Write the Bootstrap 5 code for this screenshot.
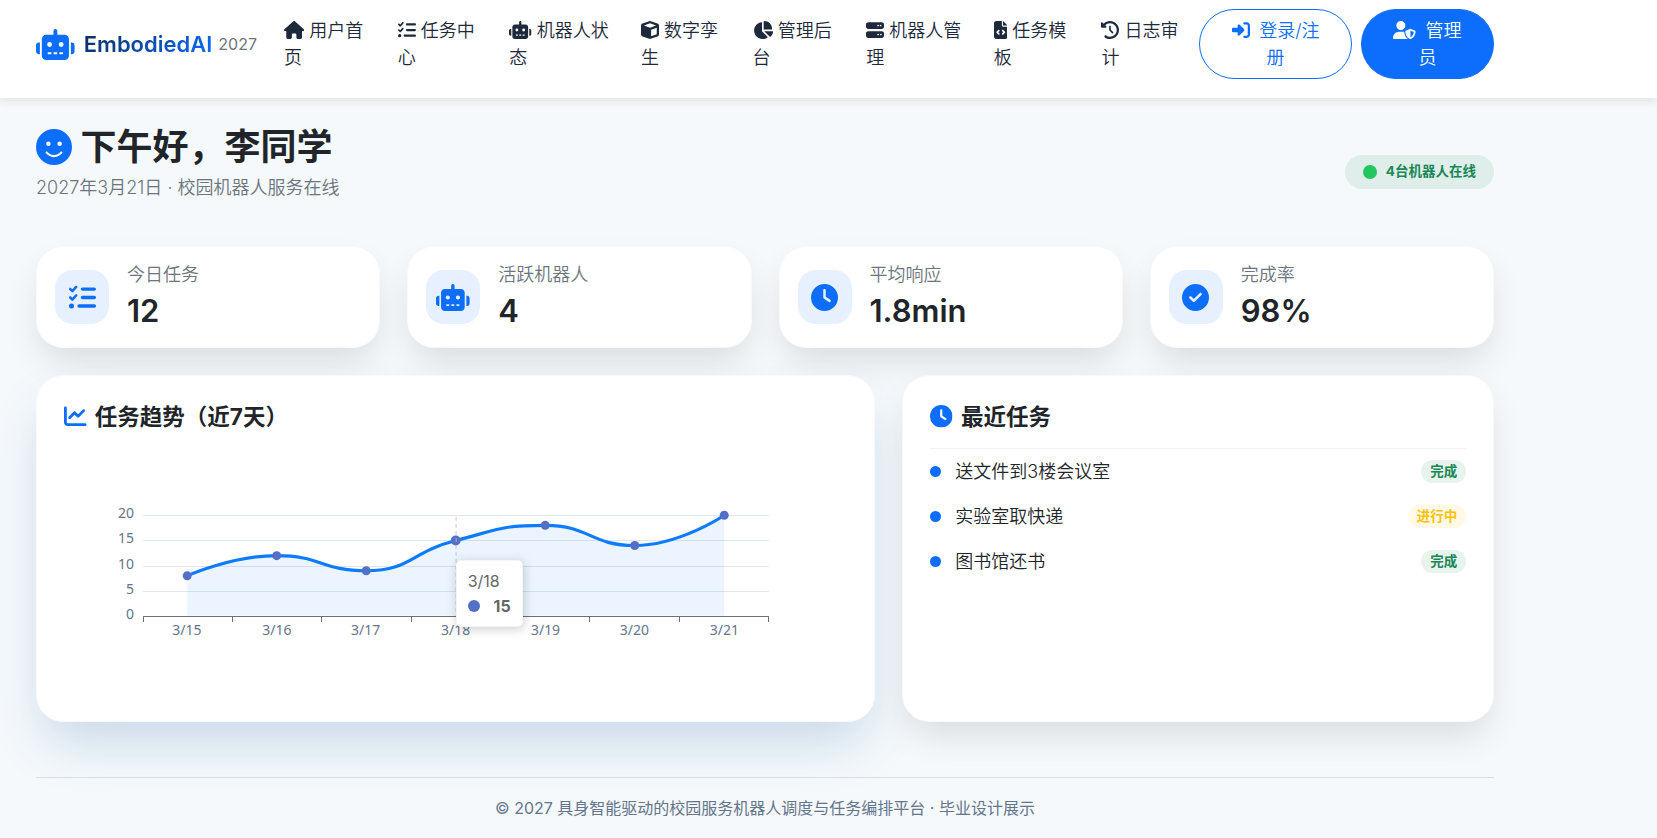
<!DOCTYPE html>
<html lang="zh-CN">
<head>
<meta charset="utf-8">
<meta name="viewport" content="width=device-width, initial-scale=1">
<title>EmbodiedAI 2027</title>
<link href="https://cdn.jsdelivr.net/npm/bootstrap@5.3.0/dist/css/bootstrap.min.css" rel="stylesheet">
<style>
  html { font-size: 18px; }
  body {
    font-family: Inter, "Noto Sans CJK SC", sans-serif;
    font-weight: 350;
    background: #f5f9fc;
    color: #212529;
  }
  .shell { max-width: 1530px; padding: 0 36px; }
  .ico { height: 1em; width: auto; fill: currentColor; vertical-align: -0.125em; }

  .topbar { background: #fff; padding: 9px 0 19px; box-shadow: 0 2px 10px rgba(0, 0, 0, .1); }
  .brand-text {
    font-size: 22px; font-weight: 600; margin-left: 9px;
    background: linear-gradient(135deg, #0b2b5a, #0d6efd);
    -webkit-background-clip: text; background-clip: text; color: transparent;
  }
  .brand-mark { height: 31px; color: #0d6efd; }
  .brand-year { font-size: 16px; font-weight: 400; color: #6c757d; margin-left: 6px; }
  .site-menu { gap: 27px; margin-left: 27px; margin-right: 13px; }
  .site-menu a { color: #1e293b; text-decoration: none; display: block; }
  .pill-btn { font-weight: 350; border-radius: 36px; padding: 7px 26px; }
  .pill-login { width: 153px; }
  .pill-admin { width: 133px; }

  .greet { font-size: 36px; line-height: 44px; font-weight: 700; margin-bottom: 5px; }
  .online { padding: 10px 18px; border-radius: 17px; }
  .online-dot { width: 14px; height: 14px; background: #22c55e; }

  .tile {
    background: #fff; border: 1px solid #f7f9fb; border-radius: 27px;
    box-shadow: 0 18px 36px -6px rgba(0, 0, 0, .12);
  }
  .tile-stat { padding: 14px 18px; }
  .tile-glow { box-shadow: 0 27px 54px -9px rgba(13, 80, 150, .2); }
  .tile-icon { width: 54px; height: 54px; border-radius: 18px; background: #e6f0ff; color: #0d6efd; font-size: 27px; }
  .stat-value { font-size: 31px; line-height: 45px; font-weight: 600; }
  .tile-title { font-weight: 700; margin-bottom: 18px; }
  .tile-title .ico { margin-right: 3px; }

  .task-row { padding: 9px 0; }
  .task-dot { width: 11px; height: 11px; margin-right: 14px; background: #0d6efd; }
  .task-list { border-top: 1px solid #f1f4f6; }

  .chart-area { min-height: 246px; }
  .chart-area text { font: 14px "Noto Sans", sans-serif; fill: #64748b; }
  .chart-tip {
    left: 50%; top: 112px; width: 67px; height: 67px; padding: 9px 11px;
    background: #fff; border: 1px solid #f4f4f6; border-radius: 5px; color: #666;
    font-size: 16px; font-weight: 400; box-shadow: 1px 2px 11px rgba(0, 0, 0, .2);
  }
  .chart-tip div { line-height: 22px; }
  .chart-tip .tip-dot { width: 12px; height: 12px; background: #5470c6; }
  .page-foot { border-top: 1px solid #dbe0e5; margin-top: 55px; padding: 18px 0; font-size: 16px; font-weight: 400; color: #64748b; }
</style>
</head>
<body>

<svg class="d-none" xmlns="http://www.w3.org/2000/svg">
  <symbol id="robot" viewBox="0 0 640 512"><path d="M320 0c17.700 0 32 14.300 32 32l0 64 120 0c39.800 0 72 32.200 72 72l0 272c0 39.800-32.200 72-72 72l-304 0c-39.800 0-72-32.200-72-72l0-272c0-39.800 32.200-72 72-72l120 0 0-64c0-17.700 14.300-32 32-32zM208 384c-8.800 0-16 7.200-16 16s7.200 16 16 16l32 0c8.800 0 16-7.200 16-16s-7.200-16-16-16l-32 0zm96 0c-8.800 0-16 7.200-16 16s7.200 16 16 16l32 0c8.800 0 16-7.200 16-16s-7.200-16-16-16l-32 0zm96 0c-8.800 0-16 7.200-16 16s7.200 16 16 16l32 0c8.800 0 16-7.200 16-16s-7.200-16-16-16l-32 0zM264 256a40 40 0 1 0 -80 0 40 40 0 1 0 80 0zm152 40a40 40 0 1 0 0-80 40 40 0 1 0 0 80zM48 224l16 0 0 192-16 0c-26.500 0-48-21.500-48-48l0-96c0-26.500 21.500-48 48-48zm544 0c26.500 0 48 21.500 48 48l0 96c0 26.500-21.500 48-48 48l-16 0 0-192 16 0z"/></symbol>
  <symbol id="tasks" viewBox="0 0 512 512"><path d="M152.100 38.200c9.900 8.900 10.700 24 1.800 33.900l-72 80c-4.400 4.900-10.600 7.800-17.200 7.900s-12.900-2.400-17.600-7L7 113C-2.300 103.600-2.300 88.400 7 79s24.600-9.400 33.900 0l22.100 22.100 55.100-61.200c8.900-9.900 24-10.700 33.900-1.800zm0 160c9.900 8.900 10.700 24 1.800 33.900l-72 80c-4.400 4.900-10.600 7.800-17.200 7.900s-12.900-2.400-17.600-7L7 273c-9.400-9.400-9.400-24.600 0-33.900s24.600-9.400 33.900 0l22.100 22.100 55.100-61.200c8.900-9.900 24-10.700 33.900-1.800zM224 96c0-17.700 14.300-32 32-32l224 0c17.700 0 32 14.300 32 32s-14.300 32-32 32l-224 0c-17.700 0-32-14.300-32-32zm0 160c0-17.700 14.300-32 32-32l224 0c17.700 0 32 14.300 32 32s-14.300 32-32 32l-224 0c-17.700 0-32-14.300-32-32zM160 416c0-17.700 14.300-32 32-32l288 0c17.700 0 32 14.300 32 32s-14.300 32-32 32l-288 0c-17.700 0-32-14.300-32-32zM48 368a48 48 0 1 1 0 96 48 48 0 1 1 0-96z"/></symbol>
  <symbol id="clock" viewBox="0 0 512 512"><path d="M256 0a256 256 0 1 1 0 512A256 256 0 1 1 256 0zM232 120l0 136c0 8 4 15.500 10.700 20l96 64c11 7.400 25.900 4.400 33.300-6.700s4.400-25.900-6.700-33.300L280 243.200 280 120c0-13.300-10.700-24-24-24s-24 10.700-24 24z"/></symbol>
</svg>

<header class="topbar position-relative">
  <nav class="shell d-flex align-items-center" aria-label="主导航">
    <a href="#" class="d-flex align-items-center text-decoration-none flex-shrink-0">
      <svg class="ico brand-mark" viewBox="0 0 640 512"><use href="#robot"/></svg>
      <span class="brand-text">EmbodiedAI</span>
      <span class="brand-year">2027</span>
    </a>
    <ul class="site-menu list-unstyled d-flex mb-0 flex-fill">
      <li><a href="#"><svg class="ico" viewBox="0 0 576 512"><path d="M575.8 255.5c0 18-15 32.1-32 32.1l-32 0 .7 160.2c0 2.700-.2 5.400-.5 8.100l0 16.200c0 22.100-17.900 40-40 40l-16 0c-1.100 0-2.200 0-3.300-.1c-1.400 .1-2.800 .1-4.200 .1L416 512l-24 0c-22.100 0-40-17.900-40-40l0-24 0-64c0-17.700-14.300-32-32-32l-64 0c-17.700 0-32 14.300-32 32l0 64 0 24c0 22.100-17.900 40-40 40l-24 0-31.900 0c-1.500 0-3-.1-4.500-.2c-1.200 .1-2.400 .2-3.600 .2l-16 0c-22.100 0-40-17.900-40-40l0-112c0-.9 0-1.900 .1-2.800l0-69.700-32 0c-18 0-32-14-32-32.100c0-9 3-17 10-24L266.400 8c7-7 15-8 22-8s15 2 21 7L564.800 231.500c8 7 12 15 11 24z"/></svg> 用户首页</a></li>
      <li><a href="#"><svg class="ico" viewBox="0 0 512 512"><use href="#tasks"/></svg> 任务中心</a></li>
      <li><a href="#"><svg class="ico" viewBox="0 0 640 512"><use href="#robot"/></svg> 机器人状态</a></li>
      <li><a href="#"><svg class="ico" viewBox="0 0 512 512"><path d="M234.500 5.700c13.900-5 29.100-5 43.100 0l192 68.600C495 83.400 512 107.500 512 134.600l0 242.900c0 27-17 51.200-42.500 60.300l-192 68.600c-13.900 5-29.100 5-43.100 0l-192-68.600C17 428.600 0 404.500 0 377.400L0 134.600c0-27 17-51.200 42.500-60.300l192-68.600zM256 66L82.300 128 256 190l173.700-62L256 66zm32 368.600l160-57.100 0-188L288 246.600l0 188z"/></svg> 数字孪生</a></li>
      <li><a href="#"><svg class="ico" viewBox="0 0 576 512"><path d="M304 240l0-223.400c0-9 7-16.600 16-16.600C443.700 0 544 100.300 544 224c0 9-7.600 16-16.600 16L304 240zM32 272C32 150.700 122.100 50.300 239 34.300c9.200-1.300 17 6.100 17 15.400L256 288 412.500 444.500c6.700 6.700 6.200 17.700-1.500 23.100C371.800 495.600 323.800 512 272 512C139.500 512 32 404.600 32 272zm526.400 16c9.300 0 16.600 7.800 15.400 17c-7.700 55.900-34.600 105.600-73.900 142.300c-6 5.600-15.400 5.200-21.200-.7L320 288l238.400 0z"/></svg> 管理后台</a></li>
      <li><a href="#"><svg class="ico" viewBox="0 0 512 512"><path d="M64 32C28.700 32 0 60.700 0 96l0 64c0 35.300 28.700 64 64 64l384 0c35.300 0 64-28.700 64-64l0-64c0-35.300-28.700-64-64-64L64 32zm280 72a24 24 0 1 1 0 48 24 24 0 1 1 0-48zm48 24a24 24 0 1 1 48 0 24 24 0 1 1 -48 0zM64 288c-35.300 0-64 28.700-64 64l0 64c0 35.300 28.700 64 64 64l384 0c35.300 0 64-28.700 64-64l0-64c0-35.300-28.700-64-64-64L64 288zm280 72a24 24 0 1 1 0 48 24 24 0 1 1 0-48zm56 24a24 24 0 1 1 48 0 24 24 0 1 1 -48 0z"/></svg> 机器人管理</a></li>
      <li><a href="#"><svg class="ico" viewBox="0 0 384 512"><path d="M64 0C28.700 0 0 28.700 0 64L0 448c0 35.300 28.700 64 64 64l256 0c35.300 0 64-28.700 64-64l0-288-128 0c-17.700 0-32-14.300-32-32L224 0 64 0zM256 0l0 128 128 0L256 0zM153 289l-31 31 31 31c9.400 9.400 9.400 24.600 0 33.900s-24.600 9.400-33.900 0L71 337c-9.400-9.400-9.400-24.600 0-33.900l48-48c9.400-9.400 24.600-9.400 33.900 0s9.400 24.600 0 33.900zM265 255l48 48c9.400 9.400 9.400 24.600 0 33.900l-48 48c-9.400 9.400-24.600 9.400-33.900 0s-9.400-24.600 0-33.900l31-31-31-31c-9.400-9.400-9.400-24.600 0-33.900s24.600-9.400 33.900 0z"/></svg> 任务模板</a></li>
      <li><a href="#"><svg class="ico" viewBox="0 0 512 512"><path d="M75 75L41 41C25.900 25.900 0 36.600 0 57.900L0 168c0 13.300 10.700 24 24 24l110.100 0c21.400 0 32.100-25.900 17-41l-30.800-30.800C155 85.500 203 64 256 64c106 0 192 86 192 192s-86 192-192 192c-40.800 0-78.600-12.700-109.700-34.400c-14.500-10.100-34.400-6.600-44.600 7.900s-6.600 34.400 7.900 44.600C151.200 495 201.700 512 256 512c141.400 0 256-114.600 256-256S397.400 0 256 0C185.300 0 121.300 28.700 75 75zm181 53c-13.300 0-24 10.700-24 24l0 104c0 6.400 2.500 12.500 7 17l72 72c9.400 9.400 24.600 9.400 33.900 0s9.400-24.600 0-33.900l-65-65 0-94.100c0-13.300-10.700-24-24-24z"/></svg> 日志审计</a></li>
    </ul>
    <div class="d-flex gap-2 flex-shrink-0">
      <button type="button" class="btn btn-outline-primary pill-btn pill-login"><svg class="ico me-1" viewBox="0 0 512 512"><path d="M217.900 105.900L340.700 228.700c7.200 7.200 11.300 17.100 11.300 27.300s-4.100 20.100-11.300 27.300L217.900 406.100c-6.400 6.400-15 9.900-24 9.900c-18.700 0-33.900-15.200-33.900-33.900l0-62.100L32 320c-17.700 0-32-14.300-32-32l0-64c0-17.700 14.300-32 32-32l128 0 0-62.100c0-18.700 15.200-33.900 33.900-33.900c9 0 17.600 3.600 24 9.900zM352 416l64 0c17.700 0 32-14.300 32-32l0-256c0-17.700-14.300-32-32-32l-64 0c-17.700 0-32-14.300-32-32s14.300-32 32-32l64 0c53 0 96 43 96 96l0 256c0 53-43 96-96 96l-64 0c-17.700 0-32-14.300-32-32s14.300-32 32-32z"/></svg> 登录/注册</button>
      <button type="button" class="btn btn-primary pill-btn pill-admin"><svg class="ico me-1" viewBox="0 0 640 512"><path d="M224 256A128 128 0 1 0 224 0a128 128 0 1 0 0 256zm-45.700 48C79.800 304 0 383.800 0 482.300C0 498.700 13.300 512 29.700 512l388.600 0c1.800 0 3.500-.2 5.300-.5c-76.300-55.100-99.800-141-103.100-200.200c-16.100-4.800-33.100-7.300-50.700-7.300l-91.400 0zm308.800-78.300l-120 48C358 277.400 352 286.200 352 296c0 63.300 25.900 168.800 134.800 214.200c5.900 2.500 12.600 2.500 18.500 0C614.100 464.800 640 359.300 640 296c0-9.800-6-18.600-15.100-22.300l-120-48c-5.700-2.300-12.100-2.300-17.800 0zM591.400 312c-3.900 50.700-27.200 116.700-95.400 149.700l0-187.800L591.400 312z"/></svg> 管理员</button>
    </div>
  </nav>
</header>

<main class="shell pt-4">
  <section class="d-flex justify-content-between align-items-center mb-4">
    <div>
      <h1 class="greet"><svg class="ico text-primary" viewBox="0 0 512 512"><path d="M256 512A256 256 0 1 0 256 0a256 256 0 1 0 0 512zM164.100 325.500C182 346.200 212.600 368 256 368s74-21.800 91.900-42.500c5.800-6.700 15.900-7.400 22.600-1.600s7.400 15.900 1.600 22.600C349.800 372.100 311.100 400 256 400s-93.800-27.900-116.100-53.500c-5.800-6.700-5.100-16.800 1.600-22.600s16.800-5.100 22.600 1.600zM144.400 208a32 32 0 1 1 64 0 32 32 0 1 1 -64 0zm192-32a32 32 0 1 1 0 64 32 32 0 1 1 0-64z"/></svg> 下午好，李同学</h1>
      <p class="text-secondary mb-3">2027年3月21日 · 校园机器人服务在线</p>
    </div>
    <span class="badge bg-success bg-opacity-10 text-success online d-flex align-items-center"><span class="online-dot rounded-circle me-2"></span>4台机器人在线</span>
  </section>

  <section class="row g-4">
    <div class="col-3"><div class="tile tile-stat d-flex align-items-center gap-3">
      <span class="tile-icon d-flex align-items-center justify-content-center"><svg class="ico" viewBox="0 0 512 512"><use href="#tasks"/></svg></span>
      <div><div class="text-secondary">今日任务</div><div class="stat-value">12</div></div>
    </div></div>
    <div class="col-3"><div class="tile tile-stat d-flex align-items-center gap-3">
      <span class="tile-icon d-flex align-items-center justify-content-center"><svg class="ico" viewBox="0 0 640 512"><use href="#robot"/></svg></span>
      <div><div class="text-secondary">活跃机器人</div><div class="stat-value">4</div></div>
    </div></div>
    <div class="col-3"><div class="tile tile-stat d-flex align-items-center gap-3">
      <span class="tile-icon d-flex align-items-center justify-content-center"><svg class="ico" viewBox="0 0 512 512"><use href="#clock"/></svg></span>
      <div><div class="text-secondary">平均响应</div><div class="stat-value">1.8min</div></div>
    </div></div>
    <div class="col-3"><div class="tile tile-stat d-flex align-items-center gap-3">
      <span class="tile-icon d-flex align-items-center justify-content-center"><svg class="ico" viewBox="0 0 512 512"><path d="M256 512A256 256 0 1 0 256 0a256 256 0 1 0 0 512zM369 209L241 337c-9.400 9.400-24.600 9.400-33.900 0l-64-64c-9.400-9.400-9.400-24.600 0-33.900s24.600-9.400 33.900 0l47 47L335 175c9.400-9.400 24.600-9.400 33.900 0s9.400 24.600 0 33.900z"/></svg></span>
      <div><div class="text-secondary">完成率</div><div class="stat-value">98%</div></div>
    </div></div>

    <div class="col-7"><div class="tile tile-glow p-4 h-100">
      <h2 class="h5 tile-title"><svg class="ico text-primary" viewBox="0 0 512 512"><path d="M64 64c0-17.700-14.300-32-32-32S0 46.300 0 64L0 400c0 44.200 35.800 80 80 80l400 0c17.700 0 32-14.300 32-32s-14.300-32-32-32L80 416c-8.800 0-16-7.200-16-16L64 64zm406.600 86.600c12.500-12.500 12.500-32.800 0-45.300s-32.800-12.500-45.300 0L320 210.700l-57.400-57.400c-12.500-12.500-32.800-12.500-45.300 0l-112 112c-12.500 12.500-12.500 32.800 0 45.300s32.800 12.500 45.300 0L240 221.300l57.400 57.400c12.500 12.500 32.800 12.500 45.300 0l128-128z"/></svg> 任务趋势（近7天）</h2>
      <div class="chart-area position-relative">
        <svg class="d-block w-100" viewBox="0 0 784 246" role="img" aria-label="近7天任务数">
          <g stroke="#e0e6f1" shape-rendering="crispEdges">
            <path d="M79 67.500H706M79 92.500H706M79 118.500H706M79 143.500H706"/>
          </g>
          <path fill="#0d7bff" fill-opacity=".08" d="M123.300 128C123.300 128 168.100 107.800 212.900 107.800C257.700 107.800 257.700 122.900 302.500 122.900C347.300 122.900 346.400 104.200 392.100 92.600C436 81.400 436.900 77.400 481.700 77.400C526.500 77.400 526.500 97.600 571.300 97.600C616.100 97.600 660.900 67.300 660.900 67.300V168H123.300Z"/>
          <path stroke="#6e7079" fill="none" shape-rendering="crispEdges" d="M79 168.500H706M79.500 169v5M168.500 169v5M257.500 169v5M347.500 169v5M437.500 169v5M526.500 169v5M616.500 169v5M705.500 169v5"/>
          <path stroke="#0d7bff" stroke-width="3.200" fill="none" stroke-linejoin="bevel" d="M123.300 128C123.300 128 168.100 107.800 212.900 107.800C257.700 107.800 257.700 122.900 302.500 122.900C347.300 122.900 346.400 104.200 392.100 92.600C436 81.400 436.900 77.400 481.700 77.400C526.500 77.400 526.500 97.600 571.300 97.600C616.100 97.600 660.900 67.300 660.900 67.300"/>
          <g fill="#5470c6">
            <circle cx="123.300" cy="128" r="4.500"/><circle cx="212.900" cy="107.800" r="4.500"/><circle cx="302.500" cy="122.900" r="4.500"/><circle cx="392.100" cy="92.600" r="5"/><circle cx="481.700" cy="77.400" r="4.500"/><circle cx="571.300" cy="97.600" r="4.500"/><circle cx="660.900" cy="67.300" r="4.500"/>
          </g>
          <path stroke="#b9bec9" stroke-opacity=".8" stroke-dasharray="4 3" d="M392.500 69V168"/>
          <g text-anchor="end"><text x="70" y="70">20</text><text x="70" y="95">15</text><text x="70" y="121">10</text><text x="70" y="146">5</text><text x="70" y="171">0</text></g>
          <g text-anchor="middle"><text x="123" y="187">3/15</text><text x="213" y="187">3/16</text><text x="302" y="187">3/17</text><text x="392" y="187">3/18</text><text x="482" y="187">3/19</text><text x="571" y="187">3/20</text><text x="661" y="187">3/21</text></g>
        </svg>
        <div class="chart-tip position-absolute d-flex flex-column justify-content-between">
          <div>3/18</div>
          <div class="d-flex align-items-center justify-content-between"><span class="tip-dot rounded-circle"></span><b>15</b></div>
        </div>
      </div>
    </div></div>

    <div class="col-5"><div class="tile p-4 h-100">
      <h2 class="h5 tile-title"><svg class="ico text-primary" viewBox="0 0 512 512"><use href="#clock"/></svg> 最近任务</h2>
      <ul class="task-list list-unstyled mb-0">
        <li class="task-row d-flex align-items-center"><span class="task-dot rounded-circle"></span>送文件到3楼会议室<span class="badge rounded-pill bg-success bg-opacity-10 text-success ms-auto">完成</span></li>
        <li class="task-row d-flex align-items-center"><span class="task-dot rounded-circle"></span>实验室取快递<span class="badge rounded-pill bg-warning bg-opacity-10 text-warning ms-auto">进行中</span></li>
        <li class="task-row d-flex align-items-center"><span class="task-dot rounded-circle"></span>图书馆还书<span class="badge rounded-pill bg-success bg-opacity-10 text-success ms-auto">完成</span></li>
      </ul>
    </div></div>
  </section>

  <footer class="page-foot text-center">© 2027 具身智能驱动的校园服务机器人调度与任务编排平台 · 毕业设计展示</footer>
</main>

<script src="https://cdn.jsdelivr.net/npm/bootstrap@5.3.0/dist/js/bootstrap.bundle.min.js"></script>
</body>
</html>
